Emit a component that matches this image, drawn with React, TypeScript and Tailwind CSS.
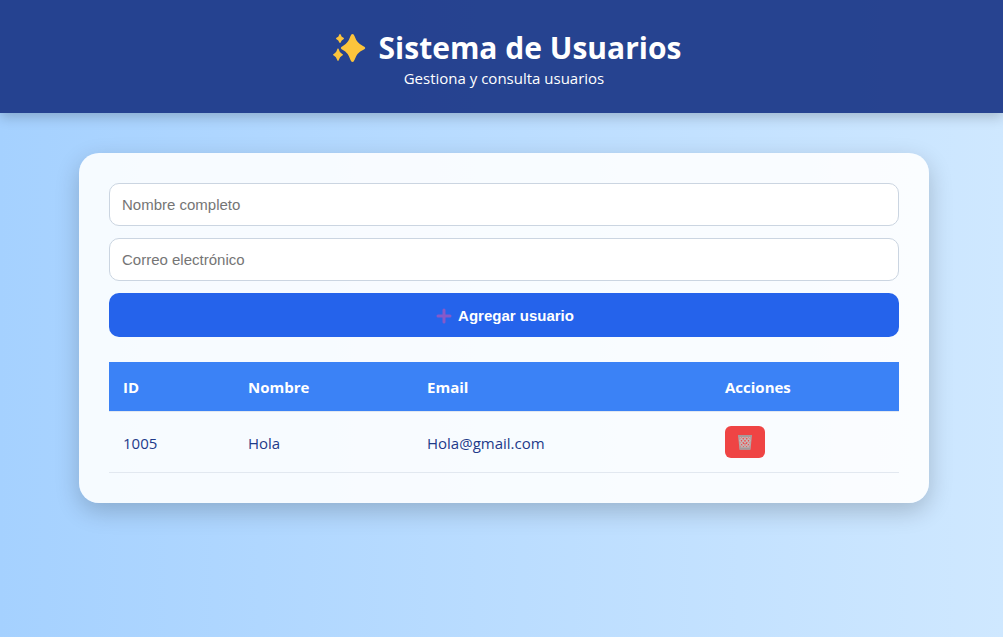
import { useState } from 'react';

type User = { id: number; name: string; email: string };

function Sparkles() {
  return (
    <svg className="h-8 w-9 shrink-0" viewBox="0 0 36 32" fill="#fcc43c" aria-hidden="true">
      <path d="M21.5 2Q22.8 2 23.6 4.2Q26 11.4 32 13.9Q34.3 15 34.3 16Q34.3 17 32 18.1Q26 20.6 23.6 27.8Q22.8 30 21.5 30Q20.2 30 19.4 27.8Q17 20.6 11.9 18.1Q9.8 17 9.8 16Q9.8 15 11.9 13.9Q17 11.4 19.4 4.2Q20.2 2 21.5 2Z" />
      <path d="M9 2Q9.6 2 9.9 3Q10.5 5 12.1 5.6Q13 6 13 6.5Q13 7 12.1 7.4Q10.5 8 9.9 10Q9.6 11 9 11Q8.4 11 8.1 10Q7.5 8 5.9 7.4Q5 7 5 6.5Q5 6 5.9 5.6Q7.5 5 8.1 3Q8.4 2 9 2Z" />
      <path d="M7 16.5Q7.7 16.5 8 17.9Q8.8 20.9 10.9 21.8Q12 22.3 12 22.8Q12 23.3 10.9 23.8Q8.8 24.7 8 27.6Q7.7 29 7 29Q6.3 29 6 27.6Q5.2 24.7 3.1 23.8Q2 23.3 2 22.8Q2 22.3 3.1 21.8Q5.2 20.9 6 17.9Q6.3 16.5 7 16.5Z" />
    </svg>
  );
}

function Plus() {
  return (
    <svg className="size-4 shrink-0" viewBox="0 0 16 16" aria-hidden="true">
      <path d="M8 2V14M2 8H14" stroke="#8659c9" strokeWidth="3" strokeLinecap="round" />
    </svg>
  );
}

function Wastebasket() {
  return (
    <svg className="size-4" viewBox="0 0 16 16" fill="none" aria-hidden="true">
      <path d="M2 2.5L3.2 15H12.8L14 2.5" stroke="#b4a5a5" strokeWidth="1.6" />
      <path
        d="M3 3L12.5 14.5M6.5 3L13 10.5M10 3L13.5 7M3 7L9.5 14.5M3.5 11L6.5 14.5M13 3L3.5 14.5M9.5 3L3 10.5M6 3L2.5 7M13 7L6.5 14.5M12.5 11L9.5 14.5"
        stroke="#c6b5b5"
        strokeWidth="1.2"
      />
      <path d="M1 2H15" stroke="#a59c9c" strokeWidth="2" />
      <path d="M3 14.5H13" stroke="#a39a9a" strokeWidth="2" />
    </svg>
  );
}

const fieldClass =
  'h-[43px] w-full rounded-[10px] border border-[#cbd5e1] bg-white px-3 font-["Liberation_Sans",sans-serif] text-[15px] text-[#1e3a8a] placeholder:text-[#757575]';

export default function App() {
  const [users, setUsers] = useState<User[]>([{ id: 1005, name: 'Hola', email: 'Hola@gmail.com' }]);
  const [name, setName] = useState('');
  const [email, setEmail] = useState('');

  const addUser = () => {
    if (!name || !email) return;
    setUsers([...users, { id: 1005 + users.length, name, email }]);
    setName('');
    setEmail('');
  };

  return (
    <div className='min-h-screen bg-linear-to-r from-[#a5d1ff] to-[#cfe8ff] font-["Open_Sans",sans-serif] text-[#1e3a8a]'>
      <header className="bg-[#1e3a8a]/95 pt-[29px] pb-6 pl-[5px] text-center text-white shadow-[0_4px_12px_rgba(0,0,0,0.2)]">
        <h1 className="flex items-center justify-center gap-3 pl-1 text-[30px] leading-[38px] font-bold">
          <Sparkles />
          Sistema de Usuarios
        </h1>
        <p className="text-[15px] leading-[22px]">Gestiona y consulta usuarios</p>
      </header>
      <main className="py-10 pl-[5px]">
        <section className="mx-auto max-w-[850px] rounded-[20px] bg-white/90 p-[30px] shadow-[0_8px_25px_rgba(0,0,0,0.2)]">
          <form
            className="flex flex-col gap-3"
            onSubmit={(e) => {
              e.preventDefault();
              addUser();
            }}
          >
            <input
              className={fieldClass}
              type="text"
              aria-label="Nombre completo"
              placeholder="Nombre completo"
              value={name}
              onChange={(e) => setName(e.target.value)}
            />
            <input
              className={fieldClass}
              type="email"
              aria-label="Correo electrónico"
              placeholder="Correo electrónico"
              value={email}
              onChange={(e) => setEmail(e.target.value)}
            />
            <button
              type="submit"
              className='flex h-11 items-center justify-center gap-1.5 rounded-[10px] bg-[#2563eb] pt-0.5 pl-0.5 font-["Liberation_Sans",sans-serif] text-[15px] font-bold text-white'
            >
              <Plus />
              Agregar usuario
            </button>
          </form>
          <table className="mt-[25px] w-full border-collapse text-left text-[15px] leading-5">
            <thead>
              <tr className="h-[49px] border-b border-[#e2e8f0] bg-[#3b82f6] text-white">
                <th className="w-[125px] px-3.5 pt-0.5">ID</th>
                <th className="w-[179px] px-3.5 pt-0.5">Nombre</th>
                <th className="w-[298px] px-3.5 pt-0.5">Email</th>
                <th className="w-[188px] px-3.5 pt-0.5">Acciones</th>
              </tr>
            </thead>
            <tbody>
              {users.map((user) => (
                <tr key={user.id} className="h-[61px] border-b border-[#e2e8f0]">
                  <td className="px-3.5 pt-0.5">{user.id}</td>
                  <td className="px-3.5 pt-0.5">{user.name}</td>
                  <td className="px-3.5 pt-0.5">{user.email}</td>
                  <td className="px-3.5">
                    <button
                      type="button"
                      aria-label="Eliminar"
                      className="flex h-8 w-10 items-center justify-center rounded-md bg-[#ef4444]"
                      onClick={() => setUsers(users.filter((u) => u.id !== user.id))}
                    >
                      <Wastebasket />
                    </button>
                  </td>
                </tr>
              ))}
            </tbody>
          </table>
        </section>
      </main>
    </div>
  );
}
